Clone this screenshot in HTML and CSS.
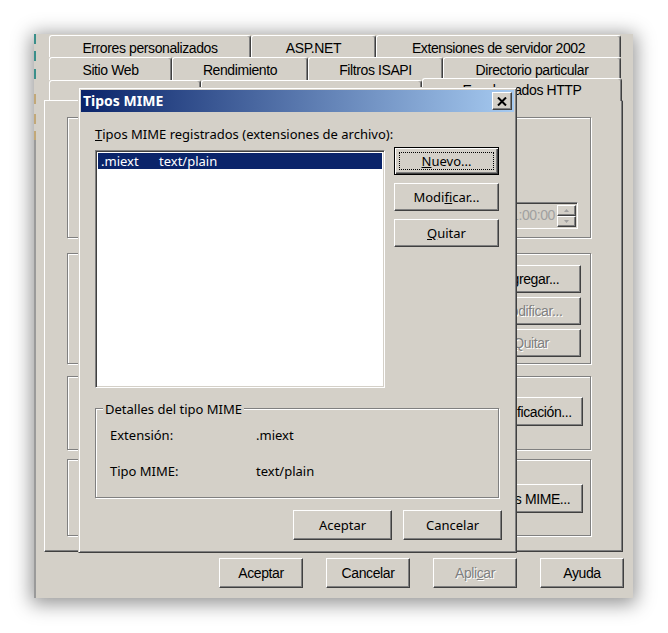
FILE: index.html
```html
<!DOCTYPE html>
<html lang="es">
<head>
<meta charset="utf-8">
<title>Propiedades de Sitio Web</title>
<link rel="stylesheet" href="styles.css">
</head>
<body>
<div class="desk">
  <div class="win">
    <div class="tabs">
      <div class="tabrow r1">
        <div class="tab t-errores">Errores personalizados</div>
        <div class="tab t-aspnet">ASP.NET</div>
        <div class="tab t-ext">Extensiones de servidor 2002</div>
      </div>
      <div class="tabrow r2">
        <div class="tab t-sitio">Sitio Web</div>
        <div class="tab t-rend">Rendimiento</div>
        <div class="tab t-filtros">Filtros ISAPI</div>
        <div class="tab t-dir">Directorio particular</div>
      </div>
      <div class="tabrow r3">
        <div class="tab t-docs"></div>
        <div class="tab t-seg"></div>
        <div class="tab active t-enc">Encabezados HTTP</div>
      </div>
    </div>

    <div class="panel">
      <div class="group g-cad">
        <div class="spin">
          <span class="spin-val">1:00:00</span>
          <span class="spin-btns">
            <span class="spin-b"><svg width="5" height="3" viewBox="0 0 5 3"><path d="M2.5 0 L5 3 L0 3 Z" fill="#a0a0a0"/></svg></span>
            <span class="spin-b"><svg width="5" height="3" viewBox="0 0 5 3"><path d="M0 0 L5 0 L2.5 3 Z" fill="#a0a0a0"/></svg></span>
          </span>
        </div>
      </div>
      <div class="group g-enc">
        <button class="btn w100" type="button">Agre<u>g</u>ar...</button>
        <button class="btn w100 off" type="button">Modificar...</button>
        <button class="btn w100 off" type="button"><u>Q</u>uitar</button>
      </div>
      <div class="group g-restr">
        <button class="btn w106" type="button">Modificación...</button>
      </div>
      <div class="group g-mime">
        <button class="btn w106" type="button">Tipos MIME...</button>
      </div>
    </div>

    <div class="footer">
      <button class="btn" type="button">Aceptar</button>
      <button class="btn" type="button">Cancelar</button>
      <button class="btn off" type="button">Apli<u>c</u>ar</button>
      <button class="btn" type="button">Ayuda</button>
    </div>

    <div class="modal">
      <div class="titlebar">
        <span class="title">Tipos MIME</span>
        <button class="close" type="button" aria-label="Cerrar">
          <svg width="10" height="9" viewBox="0 0 10 9"><path d="M1 0.5 L9 8.5 M9 0.5 L1 8.5" stroke="#000" stroke-width="2" fill="none"/></svg>
        </button>
      </div>
      <div class="mbody">
        <div class="lbl"><u>T</u>ipos MIME registrados (extensiones de archivo):</div>
        <div class="listrow">
          <div class="listbox">
            <div class="item sel"><span class="ext">.miext</span><span>text/plain</span></div>
          </div>
          <div class="btncol">
            <button class="btn mbtn default" type="button"><u>N</u>uevo...</button>
            <button class="btn mbtn" type="button">Modi<u>f</u>icar...</button>
            <button class="btn mbtn" type="button"><u>Q</u>uitar</button>
          </div>
        </div>
        <div class="details">
          <span class="caption">Detalles del tipo MIME</span>
          <div class="dgrid">
            <span>Extensión:</span><span>.miext</span>
            <span>Tipo MIME:</span><span>text/plain</span>
          </div>
        </div>
        <div class="mfoot">
          <button class="btn fbtn" type="button">Aceptar</button>
          <button class="btn fbtn" type="button">Cancelar</button>
        </div>
      </div>
    </div>
  </div>
</div>
</body>
</html>
```

FILE: styles.css
```css
* { box-sizing: border-box; }

html, body {
  margin: 0;
  background: #fff;
}

body {
  font-family: "Liberation Sans", Arial, sans-serif;
  font-size: 14px;
  letter-spacing: -0.4px;
  color: #000;
}

.desk {
  width: 668px;
  height: 633px;
  padding: 34px 0 0 34px;
  overflow: hidden;
}

/* property sheet window */
.win {
  position: relative;
  width: 599px;
  height: 564px;
  padding-top: 1px;
  background:
    linear-gradient(to bottom,
      #3a8f8a 0 10px, #d4d0c8 10px 17px, #3a8f8a 17px 27px, #d4d0c8 27px 35px,
      #3a8f8a 35px 45px, #d4d0c8 45px 60px, #c2a878 60px 70px, #d4d0c8 70px 80px,
      #c2a878 80px 90px, #d4d0c8 90px 97px, #c2a878 97px 106px, #9a9a9a 106px) 0 0 / 2px 100% no-repeat,
    #d4d0c8;
  box-shadow: 0 3px 18px 3px rgba(0, 0, 0, 0.42);
}

/* tab strip */
.tabs {
  margin-left: 15px;
  width: 575px;
}

.tabrow {
  display: flex;
  height: 22px;
}

.tabrow.r2 { height: 23px; }

.tabrow.r3 {
  height: 20px;
  position: relative;
  z-index: 1;
}

.tab {
  height: 100%;
  flex: none;
  border-top: 1px solid #fff;
  border-left: 1px solid #fff;
  border-right: 1px solid #404040;
  border-radius: 3px 3px 0 0;
  box-shadow: inset -1px 0 #808080;
  padding-top: 2px;
  line-height: 20px;
  text-align: center;
  white-space: nowrap;
  overflow: hidden;
  background: #d4d0c8;
}

.t-errores { width: 202px; }
.t-aspnet { width: 125px; }
.t-ext { width: 245px; }

.t-sitio { width: 123px; }
.t-rend { width: 136px; }
.t-filtros { width: 135px; }
.t-dir { width: 178px; }

.t-docs { width: 152px; }
.t-seg { width: 221px; }

.tab.active {
  width: 200px;
  height: 23px;
  margin-top: -2px;
  padding-top: 1px;
  position: relative;
}

/* tab page */
.panel {
  margin-left: 10px;
  width: 579px;
  height: 452px;
  border: 1px solid;
  border-color: #fff #404040 #404040 #fff;
  box-shadow: inset -1px -1px #808080;
  padding: 16px 0 0 22px;
  display: flex;
  flex-direction: column;
}

.group {
  width: 524px;
  border: 1px solid #808080;
  box-shadow: 1px 1px #fff, inset 1px 1px #fff;
  display: flex;
  flex-direction: column;
  align-items: flex-end;
}

.g-cad { height: 121px; padding: 84px 12px 0 0; }
.g-enc { height: 111px; margin-top: 15px; padding: 11px 9px 0 0; gap: 4px; }
.g-restr { height: 74px; margin-top: 12px; padding: 20px 7px 0 0; }
.g-mime { height: 77px; margin-top: 9px; padding: 24px 7px 0 0; }

/* time spinner (disabled) */
.spin {
  display: flex;
  width: 100px;
  height: 27px;
  border: 1px solid;
  border-color: #808080 #fff #fff #808080;
  box-shadow: inset 1px 1px #404040;
  padding: 2px 1px 1px 2px;
}

.spin-val {
  flex: 1;
  text-align: right;
  padding-right: 2px;
  line-height: 21px;
  color: #a0a0a0;
}

.spin-btns {
  display: flex;
  flex-direction: column;
  width: 19px;
}

.spin-b {
  flex: 1;
  display: flex;
  align-items: center;
  justify-content: center;
  border: 1px solid;
  border-color: #fff #404040 #404040 #fff;
  box-shadow: inset -1px -1px #808080;
}

/* push buttons */
.btn {
  flex: none;
  margin: 0;
  padding: 0;
  font: inherit;
  letter-spacing: inherit;
  color: #000;
  background: #d4d0c8;
  border: 1px solid;
  border-color: #fff #404040 #404040 #fff;
  box-shadow: inset -1px -1px #808080;
  text-align: center;
  white-space: nowrap;
}

.btn.off {
  color: #808080;
  text-shadow: 1px 1px #fff;
}

.w100 { width: 100px; height: 28px; }
.w106 { width: 106px; height: 29px; }

.footer {
  display: flex;
  justify-content: flex-end;
  gap: 23px;
  padding: 6px 9px 0 0;
}

.footer .btn {
  width: 84px;
  height: 30px;
}

/* MIME types dialog */
.modal {
  position: absolute;
  left: 44px;
  top: 53px;
  z-index: 2;
  width: 439px;
  height: 466px;
  background: #d4d0c8;
  border: 1px solid;
  border-color: #d4d0c8 #404040 #404040 #d4d0c8;
  box-shadow: inset 1px 1px #fff, inset -1px -1px #808080;
  padding: 2px;
  font-family: "Noto Sans", Tahoma, sans-serif;
  font-size: 13px;
  letter-spacing: 0;
}

.titlebar {
  height: 22px;
  display: flex;
  align-items: center;
  padding: 0 2px 0 2px;
  background: linear-gradient(to right, #0a246a, #a6caf0);
}

.title {
  color: #fff;
  font-weight: bold;
  font-size: 14px;
  line-height: 16px;
}

.close {
  margin: 0 0 0 auto;
  width: 20px;
  height: 18px;
  padding: 0;
  display: flex;
  align-items: center;
  justify-content: center;
  background: #d4d0c8;
  border: 1px solid;
  border-color: #fff #404040 #404040 #fff;
  box-shadow: inset -1px -1px #808080;
}

.mbody {
  padding: 14px 15px 0 14px;
}

.lbl {
  line-height: 16px;
}

.listrow {
  display: flex;
  gap: 9px;
  margin-top: 8px;
}

.listbox {
  width: 290px;
  height: 238px;
  background: #fff;
  border: 1px solid;
  border-color: #808080 #fff #fff #808080;
  box-shadow: inset 1px 1px #404040, inset -1px -1px #d4d0c8;
  padding: 2px;
}

.item {
  display: flex;
  height: 16px;
  line-height: 16px;
  padding-left: 3px;
}

.item.sel {
  background: #0a246a;
  color: #fff;
}

.ext { width: 58px; }

.btncol {
  display: flex;
  flex-direction: column;
  gap: 8px;
  margin-top: -3px;
}

.mbtn {
  width: 105px;
  height: 28px;
}

.btn.default {
  border-color: #000;
  box-shadow: inset 1px 1px #fff, inset -1px -1px #404040, inset -2px -2px #808080;
  outline: 1px dotted #000;
  outline-offset: -6px;
}

.details {
  position: relative;
  margin-top: 20px;
  width: 404px;
  height: 90px;
  border: 1px solid #808080;
  box-shadow: 1px 1px #fff, inset 1px 1px #fff;
  padding: 18px 0 0 14px;
}

.caption {
  position: absolute;
  top: -8px;
  left: 7px;
  padding: 0 2px;
  line-height: 16px;
  background: #d4d0c8;
}

.dgrid {
  display: grid;
  grid-template-columns: 146px auto;
  row-gap: 20px;
  line-height: 16px;
}

.mfoot {
  display: flex;
  justify-content: flex-end;
  gap: 11px;
  margin: 12px -3px 0 0;
}

.fbtn {
  width: 99px;
  height: 30px;
}
```
